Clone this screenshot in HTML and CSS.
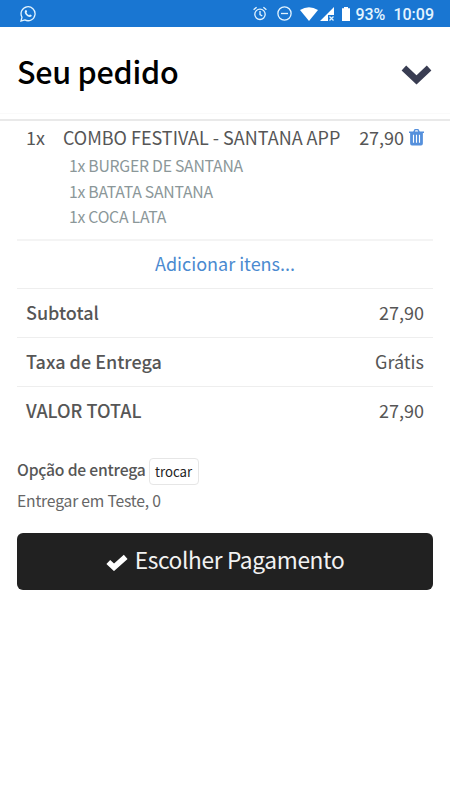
FILE: index.html
```
<!DOCTYPE html>
<html lang="pt-BR">
<head>
<meta charset="utf-8">
<title>Seu pedido</title>
<link rel="stylesheet" href="styles.css">
</head>
<body>
<div class="status">
  <svg class="whats" viewBox="0 0 16 16"><path d="M1 15l1-3.800a7 7 0 1 1 2.800 2.700z" fill="none" stroke="currentColor" stroke-width="1.300"/><path d="M5.400 4.200c.6-.5 1-.3 1.300.3l.4 1c.1.500-.5.800-.6 1.200.6 1.200 1.400 2 2.600 2.500.5-.1.700-.9 1.200-.7l1.300.7c.3.300-.1 1.300-.8 1.600-2.600 1-6.700-2.900-6-5.300.1-.5.300-.9.600-1.300z" fill="currentColor"/></svg>
  <div class="tray">
    <svg class="alarm" viewBox="0 0 14 15"><g fill="none" stroke="currentColor" stroke-width="1.300"><circle cx="7" cy="8.300" r="5.200"/><path d="M7 5v3.600l2.300 1.400M.6 3.800l3-2.600M13.400 3.800l-3-2.600"/></g></svg>
    <svg class="dnd" viewBox="0 0 15 15"><g fill="none" stroke="currentColor" stroke-width="1.300"><circle cx="7.500" cy="7.500" r="6.600"/><path d="M4 7.500h7"/></g></svg>
    <svg class="wifi" viewBox="0 0 18 14"><path d="M0 3Q9-2.500 18 3L9 14z" fill="#fff"/></svg>
    <svg class="signal" viewBox="0 0 14 14"><path d="M14 0v8H8v6H0z" fill="#fff"/><path d="M9.500 9.500l4 4M13.500 9.500l-4 4" stroke="currentColor" stroke-width="1.300"/></svg>
    <svg class="battery" viewBox="0 0 8 14"><path d="M2 0h4v1.300H8V14H0V1.300h2z" fill="#fff"/></svg>
    <span class="pct">93%</span>
    <span class="clock">10:09</span>
  </div>
</div>
<header class="header">
  <h1>Seu pedido</h1>
  <svg class="chevron" viewBox="0 0 30 20"><path d="M2.400 3L15 15 27.600 3" fill="none" stroke="#393d52" stroke-width="6.600"/></svg>
</header>
<div class="divider"></div>
<main>
  <section class="item">
    <div class="line">
      <span class="qty">1x</span>
      <span class="name">COMBO FESTIVAL - SANTANA APP</span>
      <span class="price">27,90</span>
      <svg class="trash" viewBox="0 0 16 18"><path d="M0 3h4.500L6 .5h4L11.500 3H16v1.800h-1.200V16q0 2-2 2H3.200q-2 0-2-2V4.800H0zM6.300 3h3.400l-.6-1.200H6.900z" fill="#5590dc" fill-rule="evenodd"/><path d="M4.800 6.500v8.500M8 6.500v8.500M11.200 6.500v8.500" stroke="#fff" stroke-width="1.200"/></svg>
    </div>
    <ul>
      <li>1x BURGER DE SANTANA</li>
      <li>1x BATATA SANTANA</li>
      <li>1x COCA LATA</li>
    </ul>
  </section>
  <div class="row add"><a>Adicionar itens...</a></div>
  <div class="row"><b>Subtotal</b><span>27,90</span></div>
  <div class="row"><b>Taxa de Entrega</b><span>Grátis</span></div>
  <div class="row"><b>VALOR TOTAL</b><span>27,90</span></div>
  <section class="delivery">
    <div class="option"><b>Opção de entrega</b><button class="change">trocar</button></div>
    <p class="address">Entregar em Teste, 0</p>
  </section>
  <button class="pay"><svg class="check" viewBox="0 0 22 17"><path d="M2.300 8l5.700 5.300L19.700 2.800" fill="none" stroke="#fff" stroke-width="5.600"/></svg><span>Escolher Pagamento</span></button>
</main>
</body>
</html>
```
FILE: styles.css
```
* { box-sizing: border-box; }
body { margin: 0; height: 800px; background: #fff; color: #565656; font-family: "Noto Sans CJK SC", "Noto Sans", sans-serif; font-size: 18px; overflow: hidden; }
svg { display: block; flex: none; }
b { font-weight: 500; }
.status { height: 27px; background: #1976d2; color: #e3f4ff; display: flex; justify-content: space-between; align-items: center; padding: 0 16px 0 20px; }
.whats { width: 16px; height: 16px; }
.tray { display: flex; align-items: center; }
.alarm { width: 14px; height: 15px; margin-right: 10px; }
.dnd { width: 15px; height: 15px; margin-right: 8px; }
.wifi { width: 18px; height: 14px; margin-right: 2px; }
.signal { width: 14px; height: 14px; margin-right: 8px; }
.battery { width: 8px; height: 14px; margin-right: 6px; }
.pct, .clock { font: 500 16px/27px Roboto, sans-serif; padding-top: 1px; }
.pct { width: 29px; margin-left: -1px; }
.clock { margin-left: 9px; }
.header { height: 87px; border-bottom: 1px solid #fafafa; display: flex; justify-content: space-between; align-items: center; padding: 2px 18px 0 17px; }
h1 { margin: 0; color: #000; font-size: 30.500px; letter-spacing: -.25px; line-height: 44px; font-weight: 500; }
.chevron { width: 31px; height: 20px; margin-top: 7px; }
.divider { height: 7px; border-bottom: 2px solid #e9e9e9; }
main { padding: 0 17px; }
.item { height: 118px; padding: 1px 9px 0; }
.line { display: flex; align-items: center; height: 30px; line-height: 28px; white-space: nowrap; }
.qty { width: 37px; }
.name { width: 297px; }
.price { width: 50px; }
.trash { width: 15px; height: 18px; }
ul { margin: 0; padding: 1px 0 0 43px; list-style: none; color: #8b9799; font-size: 15.800px; letter-spacing: -.27px; line-height: 25.700px; }
.row { height: 49px; border-top: 1px solid #eee; padding: 0 9px 2px; display: flex; justify-content: space-between; align-items: center; line-height: 28px; }
.add { justify-content: center; color: #4a8ad0; border-top: 2px solid #f4f4f4; padding-bottom: 3px; }
.delivery { padding-top: 23px; height: 98px; font-size: 15.700px; letter-spacing: -.2px; }
.option { display: flex; align-items: center; height: 27px; }
.option b { margin-top: -4px; }
.change { margin-left: 3px; width: 50px; height: 27px; padding: 0; border: 1px solid #e6e6e6; border-radius: 4px; background: #fff; color: #222; font: 13.200px/24px "Noto Sans CJK SC", sans-serif; }
.address { margin: 4px 0 0; line-height: 23px; color: #666; }
.pay { width: 100%; height: 57px; border: 0; border-radius: 6px; background: #212121; color: #f2f2f2; display: flex; align-items: center; justify-content: center; font: 22.700px/52px "Noto Sans CJK SC", sans-serif; letter-spacing: -.35px; padding: 0 0 4px; }
.check { width: 22px; height: 17px; margin: 5px 7px 0 0; }
```
